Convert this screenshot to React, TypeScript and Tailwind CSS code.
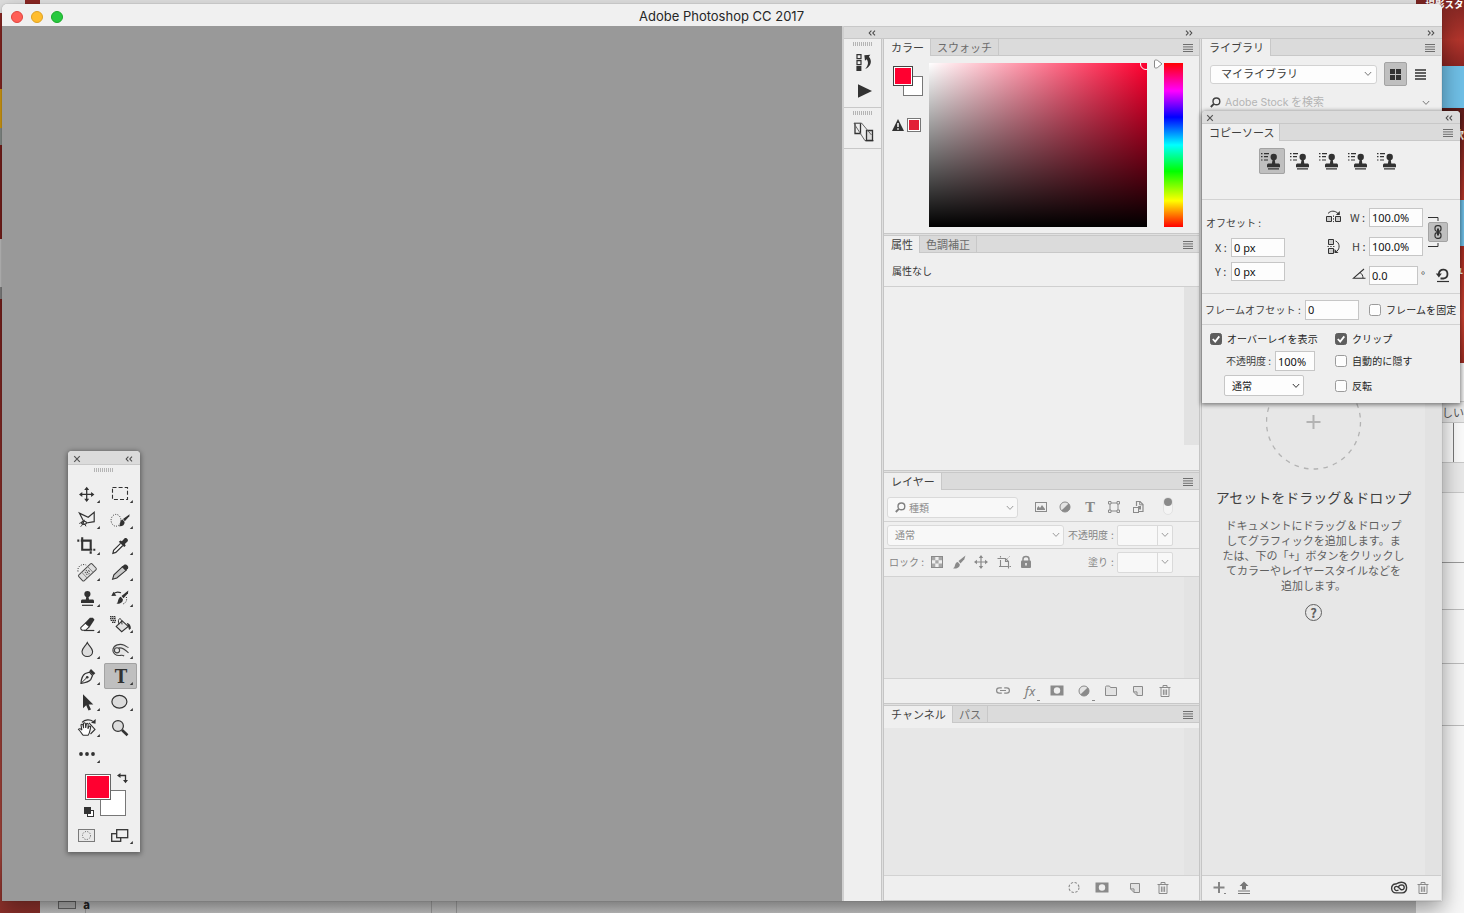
import type { ReactNode } from 'react'
import clsx from 'clsx'

const INK = '#323232'
const DIM = '#8a8a8a'

/* ---------- small shared pieces ---------- */

function Svg({ w, h, className, children }: { w: number; h: number; className?: string; children: ReactNode }) {
  return (
    <svg width={w} height={h} viewBox={`0 0 ${w} ${h}`} className={clsx('shrink-0', className)} fill="none">
      {children}
    </svg>
  )
}

function Chevrons({ dir }: { dir: 'left' | 'right' }) {
  return (
    <Svg w={8} h={6}>
      <path
        d={dir === 'left' ? 'M3.4 .6 1.2 3l2.2 2.4M7 .6 4.8 3 7 5.4' : 'M1 .6 3.2 3 1 5.4M4.6 .6 6.8 3 4.6 5.4'}
        stroke="#4a4a4a"
        strokeWidth="1.1"
      />
    </Svg>
  )
}

function Caret({ color = '#9a9a9a' }: { color?: string }) {
  return (
    <Svg w={8} h={6}>
      <path d="M.8 1 4 4.4 7.2 1" stroke={color} />
    </Svg>
  )
}

function MenuLines() {
  return (
    <Svg w={10} h={8} className="mt-px">
      <path d="M0 .5h10M0 2.9h10M0 5.3h10M0 7.5h10" stroke="#6e6e6e" />
    </Svg>
  )
}

function Grip() {
  return (
    <Svg w={20} h={4}>
      <path d="M.5 0v4M2.5 0v4M4.5 0v4M6.5 0v4M8.5 0v4M10.5 0v4M12.5 0v4M14.5 0v4M16.5 0v4M18.5 0v4" stroke="#b4b4b4" />
    </Svg>
  )
}

function Tabs({ tabs, menuPad = 'pr-1.5' }: { tabs: { label: string; width: string }[]; menuPad?: string }) {
  return (
    <div className="flex h-[17px] shrink-0 bg-[#dbdbdb]">
      {tabs.map((t, i) => (
        <div
          key={t.label}
          className={clsx(
            'flex shrink-0 items-center border-r border-[#c8c8c8] text-[11px] leading-none whitespace-nowrap',
            t.width,
            i === 0 ? 'bg-[#efefef] pl-[7px] text-[#404040]' : 'border-b bg-[#d9d9d9] pl-[6px] text-[#6b6b6b]',
          )}
        >
          {t.label}
        </div>
      ))}
      <div className={clsx('flex flex-1 items-center justify-end border-b border-[#c8c8c8]', menuPad)}>
        <MenuLines />
      </div>
    </div>
  )
}

function Field({ value, className }: { value: string; className?: string }) {
  return (
    <div
      className={clsx(
        "flex shrink-0 items-center border border-[#c6c6c6] bg-[#fdfdfd] pl-[2px] font-['Noto_Sans',sans-serif] text-[11px] leading-none whitespace-pre text-[#111]",
        className,
      )}
    >
      {value}
    </div>
  )
}

function Check({ on, label }: { on?: boolean; label: string }) {
  return (
    <div className="flex items-center text-[10px] leading-none whitespace-nowrap text-[#262626]">
      <Svg w={12} h={12}>
        <rect x=".5" y=".5" width="11" height="11" rx="2" fill={on ? '#5e5e5e' : '#fdfdfd'} stroke={on ? '#5e5e5e' : '#9b9b9b'} />
        {on && <path d="m2.8 6 2.4 2.6L9.3 3.4" stroke="#fff" strokeWidth="1.8" />}
      </Svg>
      <span className="ml-[5px] tracking-[0.1px]">{label}</span>
    </div>
  )
}

function Search({ color }: { color: string }) {
  return (
    <Svg w={11} h={11}>
      <circle cx="6.4" cy="4.4" r="3.4" stroke={color} strokeWidth="1.4" />
      <path d="M3.9 6.8.8 10" stroke={color} strokeWidth="1.9" />
    </Svg>
  )
}

function Trash({ className }: { className?: string }) {
  return (
    <Svg w={16} h={16} className={className}>
      <path d="M2.5 4.5h11M6 4.3V2.5h4v1.8M4 4.5v9h8v-9M6.4 6.5v5.4M8 6.5v5.4M9.6 6.5v5.4" stroke={DIM} />
    </Svg>
  )
}

function NewItem({ className }: { className?: string }) {
  return (
    <Svg w={16} h={16} className={className}>
      <path d="M3.5 3.5h9v9H7l-3.5-3.6zM3.5 8.9H7v3.6" stroke={DIM} fill="#e2e2e2" />
    </Svg>
  )
}

function Mask({ className }: { className?: string }) {
  return (
    <Svg w={16} h={16} className={className}>
      <rect x="1.5" y="2.5" width="13" height="10" fill={DIM} />
      <circle cx="8" cy="7.5" r="3.2" fill="#efefef" />
    </Svg>
  )
}

function Adjust() {
  return (
    <Svg w={16} h={16}>
      <circle cx="8" cy="8" r="5" fill="#e4e4e4" stroke={DIM} />
      <path d="M11.6 4.4A5 5 0 0 1 4.4 11.6z" fill={DIM} />
    </Svg>
  )
}

function MoveGlyph({ color }: { color: string }) {
  return (
    <Svg w={16} h={16}>
      <path d="M8 2.5v11M2.5 8h11" stroke={color} strokeWidth="1.2" />
      <path d="M8 1 5.8 4h4.4zM8 15l-2.2-3h4.4zM1 8l3-2.2v4.4zM15 8l-3-2.2v4.4z" fill={color} />
    </Svg>
  )
}

/* ---------- toolbox ---------- */

const tools: { id: string; active?: boolean; icon: ReactNode }[] = [
  {
    id: 'move',
    icon: (
      <>
        <path d="M15.7 7.5v12M9.7 13.4h12" stroke={INK} strokeWidth="1.3" />
        <path d="m15.7 5.7-2.5 3.3h5zm0 15.4-2.5-3.3h5zM8 13.4l3.3-2.5v5zm15.4 0-3.3-2.5v5z" fill={INK} />
      </>
    ),
  },
  { id: 'marquee', icon: <rect x="8.5" y="6.5" width="15" height="12" stroke={INK} strokeWidth="1.1" strokeDasharray="4 2.1" /> },
  {
    id: 'lasso',
    icon: (
      <>
        <path d="m12.6 14.3-4.2-8.2 8.8 4.1 6-5v9.5l-8 1.3" stroke={INK} strokeWidth="1.2" fill="#efefef" />
        <ellipse cx="13" cy="15.8" rx="2.4" ry="1.6" stroke={INK} strokeWidth="1.1" />
        <path d="M13.5 12.8c-1 3-2 5-3.8 6.9M8.3 16.5c2-1.5 4.7-1.3 6.7 2.8" stroke={INK} />
      </>
    ),
  },
  {
    id: 'quick-select',
    icon: (
      <>
        <ellipse cx="12" cy="13.3" rx="4.9" ry="5.9" stroke={INK} strokeDasharray="1 1.4" />
        <path d="M25.6 7.2 19 12l1.8 2.2 4.5-5z" fill={INK} />
        <path d="m18.6 12.6 2 2.5c.2 3.2-2.6 4.7-6 4.1 1.9-.8 1.1-2.8 1.9-4.7.5-1 1.3-1.7 2.1-1.9z" fill={INK} />
      </>
    ),
  },
  {
    id: 'crop',
    icon: <path d="M6.3 7.6h2M9.8 7.6h9.9v8.6M19.7 18.2v2.6M11.2 4.2v12.5h10M22.3 16.7h2" stroke={INK} strokeWidth="2.1" />,
  },
  {
    id: 'eyedropper',
    icon: (
      <>
        <path d="m16.6 10.3-7 7-.7 3 2.9-.9 7-6.9" stroke={INK} strokeWidth="1.2" fill="#fff" />
        <path d="m14.8 8.8 1.7-1.4 1.4.8 2.5-2.7c1.7-1.4 4.7 1.3 3.1 3.1L20.9 11l.8 1.7-1.5 1.3z" fill={INK} />
      </>
    ),
  },
  {
    id: 'healing',
    icon: (
      <>
        <path d="M7 12.5c-1-6 5-8 8.2-6.4" stroke={INK} strokeDasharray="1 1.4" />
        <g transform="rotate(-43 16.4 13.3)">
          <rect x="7.2" y="9.3" width="18.4" height="8" rx="1.3" fill="#dedede" stroke="#4c4c4c" />
          <path d="M12.3 9.3v8M20.5 9.3v8" stroke="#777" strokeWidth=".8" />
          <circle cx="16.4" cy="13.3" r="2.1" stroke="#555" strokeDasharray="1.1 1.1" />
          <circle cx="16.4" cy="13.3" r=".7" fill="#444" />
        </g>
      </>
    ),
  },
  {
    id: 'pencil',
    icon: (
      <>
        <path d="m18.5 7.7 3.6 3.6-9.3 7.7-4.2 1.2 1.3-4.3z" fill="#c9c9c9" stroke={INK} strokeWidth="1.1" />
        <path d="m17.7 7.7 2.9-2.1c1.7-.6 4.4 1.7 3.5 3.7L22 11.8z" fill={INK} />
      </>
    ),
  },
  {
    id: 'stamp',
    icon: (
      <>
        <circle cx="16.4" cy="9" r="3.1" fill={INK} />
        <path d="M15.4 11h2l.6 3.4h3.4c1 0 1.6.7 1.6 1.7V18H10v-1.9c0-1 .6-1.7 1.6-1.7h3.2z" fill={INK} />
        <path d="M11 20.3h11" stroke={INK} strokeWidth="1.2" />
      </>
    ),
  },
  {
    id: 'history-brush',
    icon: (
      <>
        <path d="M24.3 5.5 17.5 11l2 2.3 4.5-5z" fill={INK} />
        <path d="m16.8 11.7 2.1 2.5c.1 3.4-3 5-6.7 4.4 2-.7 1.4-2.8 2.4-4.7.6-1.2 1.3-1.9 2.2-2.2z" fill={INK} />
        <path d="M9 9.4c1.8-2.3 5-2.8 8-1.6" stroke={INK} strokeWidth="1.2" />
        <path d="m7.3 11 2.2-4.2 2.9 4z" fill={INK} />
        <path d="M22.3 12c1 3-.3 6-3.4 7" stroke={INK} strokeDasharray="1 1.4" />
      </>
    ),
  },
  {
    id: 'eraser',
    icon: (
      <>
        <path d="m10 16.3 4.4-4.1 4 3.5-3.7 3.6h-3.4c-1.3-.6-2-1.8-1.3-3z" fill="#fff" stroke={INK} strokeWidth="1.1" />
        <path d="m13.9 12 5-5.3h3l1.6 2.1-4.6 7z" fill={INK} />
        <path d="M13 19.5h10.3" stroke={INK} strokeWidth="1.2" />
      </>
    ),
  },
  {
    id: 'bucket',
    icon: (
      <>
        <path d="m18.2 9.8 6 5.6-6.5 5.3-5.5-5.3z" fill="#e3e3e3" stroke={INK} strokeWidth="1.1" />
        <path d="M15 13.3c-1.3-3.6-.3-6 1.3-5.5 1.2.4 1.4 2.4 1.7 5.6" stroke={INK} />
        <path d="M22.7 11.8c2.6.5 4.1 2.5 4.2 5.8l-1.8 1.3c-.8-2-.8-4-2.4-7.1z" fill={INK} />
        <path d="M6 5.5h5M6 7.5h6M7 9.5h5M8 11.5h3" stroke={INK} strokeWidth="1.2" strokeDasharray="1.2 .7" />
        <path d="M7 5v5M9 5v7M11 5v7" stroke={INK} strokeWidth=".7" />
      </>
    ),
  },
  {
    id: 'blur',
    icon: <path d="M16.3 5.5c1.6 3.6 5.3 5.8 5.3 9 0 3-2.4 5-5.3 5S11 17.5 11 14.5c0-3.2 3.7-5.4 5.3-9z" fill="#dcdcdc" stroke={INK} strokeWidth="1.1" />,
  },
  {
    id: 'burn',
    icon: (
      <>
        <path
          d="M24.5 10.5c-1.6-.2-2.4-1.5-4.2-2.3-4.8-2-10.3-.2-11.3 4-.7 4.2 3 7 7.5 6.2 1.300-.3 2.500-.2 3.600.6"
          stroke="#444"
          strokeWidth="1.1"
          fill="#e6e6e6"
        />
        <circle cx="13" cy="13.3" r="2.6" stroke="#444" strokeWidth="1.1" />
        <path d="M14.5 11c3-.8 6.500 1.300 10 4.800" stroke="#444" strokeWidth="1.1" />
      </>
    ),
  },
  {
    id: 'pen',
    icon: (
      <>
        <path d="M10 20.3c.2-3.8.8-7.7 4.3-9.8l4.2-1.3 3 3.4-1.6 3.7c-2.3 3-6 3.5-9.9 4z" fill="#efefef" stroke={INK} strokeWidth="1.2" />
        <path d="m18.2 8.300 1.800-2.400 4.300 4.400-2.200 1.900z" fill={INK} />
        <path d="m10.5 19.8 5.3-5.2" stroke={INK} />
        <circle cx="16.2" cy="14.2" r="1.3" fill={INK} />
      </>
    ),
  },
  {
    id: 'type',
    active: true,
    icon: (
      <text x="17" y="19.8" textAnchor="middle" fontFamily="DejaVu Serif, serif" fontWeight="bold" fontSize="18.5" textLength="12.5" lengthAdjust="spacingAndGlyphs" fill={INK}>
        T
      </text>
    ),
  },
  { id: 'path-select', icon: <path d="M12 5.2v14l3.2-2.9 2.3 5.2 2.5-1.1-2.3-5h4.6z" fill={INK} /> },
  { id: 'shape', icon: <ellipse cx="15.4" cy="12.7" rx="7.5" ry="6.4" fill="#dcdcdc" stroke={INK} strokeWidth="1.2" /> },
  {
    id: 'hand',
    icon: (
      <>
        <path d="m18 7.8 6 6.6-4.5 4.6" stroke={INK} strokeWidth="1.1" />
        <path d="M11 7.3c3-3 8-3.3 11-.9" stroke={INK} strokeWidth="1.2" />
        <path d="m24.7 4-.2 4.8-4.5-1z" fill={INK} />
        <path
          d="M12.3 20.3c-1.7-1.5-2.6-4-4.8-5.9.8-1.3 2.4-.6 3.4.8l-.9-5.2c.3-1.2 1.7-1 2 .2l.6 3-.2-4.6c.3-1.2 1.8-1.1 2 .1l.3 4.3.7-4c.5-1 1.9-.7 1.8.5l-.3 4.3 1.1-2.4c.8-.7 1.9-.1 1.6 1-.6 3-.7 5.8-2.600 7.900z"
          fill="#fff"
          stroke={INK}
          strokeWidth="1.1"
        />
      </>
    ),
  },
  {
    id: 'zoom',
    icon: (
      <>
        <circle cx="14" cy="11" r="5.4" fill="#dcdcdc" stroke={INK} strokeWidth="1.2" />
        <path d="m18 15 5.5 5.3" stroke={INK} strokeWidth="2.6" />
      </>
    ),
  },
  {
    id: 'more',
    icon: (
      <>
        <circle cx="10" cy="13" r="1.9" fill={INK} />
        <circle cx="16" cy="13" r="1.9" fill={INK} />
        <circle cx="22" cy="13" r="1.9" fill={INK} />
      </>
    ),
  },
]

function Toolbox() {
  return (
    <div className="absolute top-[451px] left-[68px] flex h-[401px] w-[72px] flex-col overflow-hidden rounded-t-[4px] bg-[#efefef] shadow-[0_1px_5px_1px_rgba(0,0,0,0.4)]">
      <div className="flex h-[14px] shrink-0 items-center justify-between border-b border-[#c8c8c8] bg-[#dbdbdb] pt-[2px] pr-[7px] pl-[5px]">
        <Svg w={8} h={8}>
          <path d="m1.200 1.200 5.600 5.600m0-5.600L1.200 6.800" stroke="#555" strokeWidth="1.2" />
        </Svg>
        <Chevrons dir="left" />
      </div>
      <div className="flex h-4 shrink-0 justify-center pt-[3px]">
        <Grip />
      </div>
      <div className="ml-[3px] grid w-[66px] grid-cols-2">
        {tools.map(t => (
          <div key={t.id} className={clsx('h-[26px] w-[33px]', t.active && 'rounded-[2px] bg-[#bfbfbf] outline outline-offset-[-1px] outline-[#a3a3a3]')}>
            <Svg w={33} h={26}>
              {t.icon}
              {t.id !== 'zoom' && <path d="M28.8 19v3h-3z" fill={INK} />}
            </Svg>
          </div>
        ))}
      </div>

      {/* foreground / background swatches */}
      <div className="relative mt-[5px] ml-4 h-[46px] w-[44px] shrink-0">
        <div className="absolute top-[18px] left-4 h-[26px] w-[26px] border border-[#777] bg-white" />
        <div className="absolute top-[2px] left-[1px] h-[26px] w-[26px] border border-[#666] bg-[#ff0030] shadow-[inset_0_0_0_1px_#fff]" />
        <svg width="12" height="12" className="absolute top-0 left-[33px]" fill="none">
          <path d="M2.5 3.5h6v5" stroke={INK} strokeWidth="1.3" />
          <path d="M0 3.5 3.5 1v5zM8.5 11.3 6 8h5z" fill={INK} />
        </svg>
        <svg width="11" height="11" className="absolute top-[35px] left-0" fill="none">
          <rect x="3.5" y="3.5" width="6" height="6" fill="#fff" stroke={INK} />
          <rect width="7" height="7" fill={INK} />
        </svg>
      </div>
      <div className="mt-[11px] flex shrink-0 pl-[10px]">
        <Svg w={17} h={13}>
          <rect x=".5" y=".5" width="16" height="12" fill="#e8e8e8" stroke="#7a7a7a" />
          <circle cx="8.5" cy="6.5" r="4" stroke="#555" strokeDasharray="1 1.4" />
        </Svg>
        <Svg w={22} h={17} className="ml-4">
          <rect x=".7" y="4.7" width="9" height="7.6" stroke={INK} strokeWidth="1.3" fill="#efefef" />
          <rect x="5.7" y=".7" width="11" height="8" stroke={INK} strokeWidth="1.3" fill="#efefef" />
          <path d="M21.8 12v3h-3z" fill={INK} />
        </Svg>
      </div>
    </div>
  )
}

/* ---------- docked panels ---------- */

function IconStrip() {
  return (
    <div className="flex w-[38px] shrink-0 flex-col border-r border-[#c5c5c5] bg-[#efefef]">
      <div className="flex h-[69px] shrink-0 flex-col items-center border-b border-[#c8c8c8] pt-[3px]">
        <Grip />
        <Svg w={20} h={18} className="mt-[7px] ml-1">
          <path d="M2 1.6h4v4H2zM2 7.6h4v4H2z" stroke={INK} strokeWidth="1.2" />
          <rect x="1.4" y="13" width="5" height="5" fill={INK} />
          <path d="m9.3 2.3 6-.6-1.4 2c3.5 4 2.5 9.5-3.7 12.3 3-3.3 3.7-6.600 1.500-9.800l-1.700 1.600z" fill={INK} />
        </Svg>
        <Svg w={16} h={14} className="mt-[13px] ml-1">
          <path d="M1 .3 15 7 1 13.7z" fill={INK} />
        </Svg>
      </div>
      <div className="flex h-[41px] shrink-0 flex-col items-center border-b border-[#c8c8c8] pt-[3px]">
        <Grip />
        <Svg w={22} h={20} className="mt-[7px] ml-[3px]">
          <path d="M2 1.5v10h5.5v-10" stroke={INK} strokeWidth="1.3" />
          <path d="M13.5 8.5h6v10h-6z" fill="#ddd" stroke={INK} strokeWidth="1.3" />
          <path d="M1 1.5 12 18.7M8.5 1l10 12" stroke="#666" />
          <path d="M1 1.2h7.5M12 18.7h8.5" stroke={INK} />
        </Svg>
      </div>
    </div>
  )
}

function ColorPanel() {
  return (
    <section className="flex h-[195px] shrink-0 flex-col border-b border-[#c8c8c8]">
      <Tabs tabs={[{ label: 'カラー', width: 'w-[47px]' }, { label: 'スウォッチ', width: 'w-[68px]' }]} />
      <div className="flex pt-[7px] pl-[9px]">
        <div className="w-9 shrink-0">
          <div className="relative mt-[3px] h-[30px] w-[30px]">
            <div className="absolute top-[10px] left-[10px] h-5 w-5 border border-[#777] bg-white" />
            <div className="absolute top-0 left-0 h-5 w-5 border border-[#444] bg-[#ff0030] shadow-[inset_0_0_0_1px_#fff]" />
          </div>
          <div className="mt-[22px] flex items-center gap-[3px]">
            <Svg w={12} h={12} className="-ml-px">
              <path d="M6 0 12 12H0z" fill={INK} />
              <path d="M6 4v4M6 9.3v1.4" stroke="#fff" strokeWidth="1.5" />
            </Svg>
            <div className="h-[14px] w-[14px] shrink-0 border border-[#777] bg-[#e21f37] shadow-[inset_0_0_0_1px_#fff]" />
          </div>
        </div>
        <div className="relative h-[164px] w-[218px] shrink-0 overflow-hidden bg-[linear-gradient(to_top,#000,transparent),linear-gradient(to_right,#fff,#ff0030)]">
          <div className="absolute -top-[5px] left-[211px] h-[12px] w-[12px] rounded-full border border-white" />
        </div>
        <Svg w={10} h={10} className="-mt-[4px] ml-[6px]">
          <path d="M1.5 1.8c0-1 2-1 3-.4L9 4.9 4.5 8.6c-1 .6-3 .6-3-.4z" fill="#fff" stroke="#888" />
        </Svg>
        <div className="ml-px h-[164px] w-[19px] bg-[linear-gradient(to_bottom,#f00,#f0f_17%,#00f_33%,#0ff_50%,#0f0_66%,#ff0_84%,#f00)]" />
      </div>
    </section>
  )
}

function PropertiesPanel() {
  return (
    <section className="mt-px flex h-[236px] shrink-0 flex-col border-y border-[#c8c8c8]">
      <Tabs tabs={[{ label: '属性', width: 'w-9' }, { label: '色調補正', width: 'w-[57px]' }]} />
      <div className="flex h-[34px] shrink-0 items-center border-b border-[#cfcfcf] pt-px pl-2 text-[10px] text-[#333]">属性なし</div>
      <div className="flex h-[158px] justify-end">
        <div className="w-[15px] bg-[#e2e2e2]" />
      </div>
    </section>
  )
}

function DimSelect({ className, children }: { className: string; children: ReactNode }) {
  return (
    <div
      className={clsx(
        'flex shrink-0 items-center justify-between rounded-[3px] border border-[#dadada] bg-[#f8f8f8] pr-[3px] pl-[7px] text-[10px] leading-none text-[#8e8e8e]',
        className,
      )}
    >
      {children}
      <Caret />
    </div>
  )
}

function DimAmount({ label }: { label: string }) {
  return (
    <div className="flex shrink-0 items-center text-[10px] leading-none text-[#858585]">
      <span className="whitespace-nowrap">{label}</span>
      <span className="mr-[3px] ml-[3px]">:</span>
      <div className="flex h-[21px] w-[56px] rounded-[2px] border border-[#dadada] bg-[#f8f8f8]">
        <div className="w-[40px] border-r border-[#dadada]" />
        <div className="flex flex-1 items-center justify-center">
          <Caret />
        </div>
      </div>
    </div>
  )
}

function LayersPanel() {
  return (
    <section className="mt-px flex h-[232px] shrink-0 flex-col border-y border-[#c8c8c8]">
      <Tabs tabs={[{ label: 'レイヤー', width: 'w-[58px]' }]} />
      <div className="flex h-8 shrink-0 items-center border-b border-[#d2d2d2] pt-1 pl-[3px]">
        <DimSelect className="h-[21px] w-[131px]">
          <span className="flex items-center gap-[3px]">
            <Search color="#808080" />
            種類
          </span>
        </DimSelect>
        <div className="mb-px ml-[11px] flex">
          <div className="flex w-6 justify-center">
            <Svg w={16} h={16}>
              <rect x="2.5" y="3.5" width="11" height="9" stroke={DIM} />
              <path d="M4 11V9l1.5-2L7 9l2-3 3 4v1z" fill={DIM} />
            </Svg>
          </div>
          <div className="flex w-6 justify-center">
            <Adjust />
          </div>
          <div className="flex w-[25px] justify-center">
            <Svg w={16} h={16}>
              <text x="8" y="12.5" textAnchor="middle" fontFamily="DejaVu Serif, serif" fontWeight="bold" fontSize="13" fill={DIM}>
                T
              </text>
            </Svg>
          </div>
          <div className="flex w-6 justify-center">
            <Svg w={16} h={16}>
              <rect x="4" y="4" width="8" height="8" stroke={DIM} />
              <path d="M2.5 2.5h2.5v2.5H2.5zM11 2.5h2.5v2.5H11zM2.5 11h2.5v2.5H2.5zM11 11h2.5v2.5H11z" fill="#efefef" stroke={DIM} />
            </Svg>
          </div>
          <div className="flex w-6 justify-center">
            <Svg w={16} h={16}>
              <path d="M6.5 7V2.5H10L13 5.5v7H9" stroke={DIM} strokeWidth="1.2" />
              <path d="M9.7 2.5v3.3H13" stroke={DIM} />
              <rect x="3.5" y="8.5" width="5" height="5" stroke={DIM} fill="#efefef" />
              <path d="M8 7h3v3.5H9z" fill={DIM} />
            </Svg>
          </div>
        </div>
        <div className="mb-1 ml-[13px] h-[18px] w-[10px] rounded-full border border-[#e2e2e2] bg-[#f4f4f4]">
          <div className="h-[8px] w-[8px] rounded-full bg-[#8a8a8a]" />
        </div>
      </div>
      <div className="flex h-[27px] shrink-0 items-center border-b border-[#d2d2d2] pl-[3px]">
        <DimSelect className="mr-1 h-[21px] w-[177px]">通常</DimSelect>
        <DimAmount label="不透明度" />
      </div>
      <div className="flex h-[28px] shrink-0 items-center border-b border-[#d2d2d2] pb-px pl-[5px] text-[10px] leading-none text-[#858585]">
        <span className="w-[37px] whitespace-pre">ロック :</span>
        <div className="flex w-[22px] justify-center">
          <Svg w={16} h={16}>
            <rect x="2.5" y="2.5" width="11" height="11" stroke={DIM} />
            <path d="M3 3h3.3v3.3H3zM9.6 3H13v3.3H9.6zM6.3 6.3h3.3v3.3H6.3zM3 9.6h3.3V13H3zM9.6 9.6H13V13H9.6z" fill="#a8a8a8" />
          </Svg>
        </div>
        <div className="flex w-[22px] justify-center">
          <Svg w={16} h={16}>
            <path d="M14.5 1.5 7.5 7l2 2.4 3.8-4.2z" fill={DIM} />
            <path d="m6.8 8 2 2.2c.2 3-3 5-6.8 4 2-.6 1.6-2.4 2.4-4.2.5-1.2 1.4-1.9 2.4-2z" fill={DIM} />
          </Svg>
        </div>
        <div className="flex w-[22px] justify-center">
          <MoveGlyph color={DIM} />
        </div>
        <div className="flex w-[23px] justify-center">
          <Svg w={16} h={16}>
            <path d="M4.5 2v1.5M1.5 4.5H3M3 4.5h6.5l3 3v3.5M4.5 6v7M3 12.5h9M12.5 11v3.5M13.5 12.5H15M9.5 4.5v3h3" stroke={DIM} strokeWidth="1.1" />
            <path d="m11.5 4.5 2-2" stroke={DIM} strokeDasharray="1 1" />
          </Svg>
        </div>
        <div className="flex w-[22px] justify-center">
          <Svg w={16} h={16}>
            <rect x="3" y="6.5" width="10" height="7.5" rx="1" fill={DIM} />
            <path d="M5 7V5c0-3.3 6-3.3 6 0v2" stroke={DIM} strokeWidth="1.5" />
            <path d="M8 9v2.5" stroke="#efefef" strokeWidth="1.6" />
          </Svg>
        </div>
        <div className="ml-[51px]">
          <DimAmount label="塗り" />
        </div>
      </div>
      <div className="flex flex-1 justify-end bg-[#e7e7e7]">
        <div className="w-[15px] bg-[#e3e3e3]" />
      </div>
      <div className="flex h-[25px] shrink-0 items-center border-t border-[#d2d2d2] pl-[105px]">
        <div className="flex w-[27px] justify-center">
          <Svg w={16} h={16}>
            <path d="M6.8 4.8H4.3a2.7 2.7 0 0 0 0 5.4h2.5M9.2 4.8h2.5a2.7 2.7 0 0 1 0 5.4H9.2M5 7.5h6" stroke={DIM} strokeWidth="1.2" />
          </Svg>
        </div>
        <div className="relative flex w-[27px] justify-center pl-px text-[13px] leading-4 text-[#808080] italic">
          <span className="font-['Noto_Sans']">fx</span>
          <span className="absolute -bottom-[2px] left-[21px] h-px w-[3px] bg-[#8a8a8a]" />
        </div>
        <div className="flex w-[27px] justify-center">
          <Mask />
        </div>
        <div className="relative flex w-[28px] justify-center">
          <Adjust />
          <span className="absolute -bottom-[2px] left-[22px] h-px w-[3px] bg-[#8a8a8a]" />
        </div>
        <div className="flex w-[26px] justify-center">
          <Svg w={16} h={16}>
            <path d="M2.5 4.5c0-1 .3-1.5 1-1.5h3l1 1.5h6v8h-11z" fill="#e2e2e2" stroke={DIM} />
          </Svg>
        </div>
        <div className="flex w-[27px] justify-center">
          <NewItem />
        </div>
        <div className="flex w-[27px] justify-center">
          <Trash />
        </div>
      </div>
    </section>
  )
}

function ChannelsPanel() {
  return (
    <section className="mt-px flex flex-1 flex-col border-y border-[#c8c8c8]">
      <Tabs tabs={[{ label: 'チャンネル', width: 'w-[69px]' }, { label: 'パス', width: 'w-[35px]' }]} />
      <div className="mt-[5px] flex flex-1 justify-end bg-[#e7e7e7]">
        <div className="w-[15px] bg-[#e3e3e3]" />
      </div>
      <div className="flex h-[25px] shrink-0 items-center border-t border-[#d2d2d2] pl-[182px]">
        <Svg w={16} h={16}>
          <circle cx="8" cy="7.5" r="5" stroke={DIM} strokeWidth="1.1" strokeDasharray="2.4 1.53" />
        </Svg>
        <Mask className="ml-[12px]" />
        <NewItem className="ml-[17px]" />
        <Trash className="ml-[12px]" />
      </div>
    </section>
  )
}

function LibraryPanel() {
  return (
    <section className="flex w-[240px] shrink-0 flex-col border-l border-[#c5c5c5] bg-[#efefef]">
      <Tabs tabs={[{ label: 'ライブラリ', width: 'w-[69px]' }]} />
      <div className="flex h-9 shrink-0 items-center pl-2">
        <div className="flex h-[19px] w-[167px] items-center justify-between rounded-[3px] border border-[#d2d2d2] bg-[#fdfdfd] pr-1 pb-px pl-[10px] text-[11px] leading-none text-[#3a3a3a]">
          マイライブラリ
          <Caret color="#777" />
        </div>
        <div className="ml-[7px] flex h-6 w-[23px] items-center justify-center rounded-[2px] border border-[#a3a3a3] bg-[#bfbfbf]">
          <Svg w={11} h={11}>
            <path d="M0 0h5v5H0zM6 0h5v5H6zM0 6h5v5H0zM6 6h5v5H6z" fill={INK} />
          </Svg>
        </div>
        <Svg w={11} h={11} className="ml-2">
          <path d="M0 1h11M0 4h11M0 7h11M0 10h11" stroke={INK} strokeWidth="1.7" />
        </Svg>
      </div>
      <div className="flex h-5 shrink-0 items-center pt-px pr-[11px] pl-2 text-[11px] leading-none text-[#b4b4b4]">
        <Search color="#404040" />
        <span className="ml-1 flex-1 whitespace-nowrap">
          <span className="font-['Inter',sans-serif] text-[10.5px]">Adobe Stock</span> を検索
        </span>
        <Caret color="#777" />
      </div>
      <div className="flex flex-1 bg-[#e7e7e7]">
        <div className="flex w-[223px] flex-col items-center pt-[262px]">
          <Svg w={96} h={96}>
            <circle cx="47.5" cy="48" r="47" stroke="#b3b3b3" strokeWidth="1.3" strokeDasharray="4.6 5.25" />
            <path d="M47.5 41v14M40.500 48h14" stroke="#b3b3b3" strokeWidth="2" />
          </Svg>
          <h2 className="mt-[17px] text-[14px] leading-5 whitespace-nowrap text-[#404040]">アセットをドラッグ＆ドロップ</h2>
          <p className="mt-[11px] text-center text-[11px] leading-[15px] whitespace-nowrap text-[#606060]">
            ドキュメントにドラッグ＆ドロップ
            <br />
            してグラフィックを追加します。ま
            <br />
            たは、下の「+」ボタンをクリックし
            <br />
            てカラーやレイヤースタイルなどを
            <br />
            追加します。
          </p>
          <div className="mt-[11px] flex h-[17px] w-[17px] items-center justify-center rounded-full border-[1.5px] border-[#606060] text-[13px] leading-none font-bold text-[#606060]">
            ?
          </div>
        </div>
        <div className="flex-1 bg-[#e2e2e2]" />
      </div>
      <div className="flex h-[26px] shrink-0 items-center border-t border-b border-[#cdcdcd] pr-[10px] pl-[10px]">
        <Svg w={16} h={16}>
          <path d="M7 2v11M1.5 7.5h11" stroke="#858585" strokeWidth="2" />
          <path d="M12 13.5h2" stroke="#858585" />
        </Svg>
        <Svg w={14} h={14} className="ml-[9px]">
          <path d="M7 .5 2.5 5H5v3.5h4V5h2.5z" fill="#777" />
          <path d="M1 10h12M1 12.5h12" stroke="#777" />
        </Svg>
        <Svg w={18} h={14} className="mr-[7px] ml-auto">
          {/* two interlocking rings inside a cloud outline */}
          <path d="M6 3C0 2.500.3 11.900 6 11.900h6.200c6 0 6-10.600-.8-10.700C9 1.200 7.500 2 6 3z" stroke="#3a3a3a" strokeWidth="1.4" />
          <path d="M8.500 9.200c-4 1.600-5.500-3-2.300-3.800 2.500-.2 3.300 2.500 5.300 3.400 3.500.4 3.600-4.700.3-4.900-2.300 0-3.500 1.500-3.300 2.900" stroke="#3a3a3a" strokeWidth="1.4" />
        </Svg>
        <Trash />
      </div>
    </section>
  )
}

/* ---------- floating clone source panel ---------- */

function ClonePanel() {
  return (
    <div className="absolute top-[111px] left-[1202px] flex h-[292px] w-[258px] flex-col overflow-hidden rounded-t-[4px] bg-[#efefef] text-[10px] leading-none text-[#3c3c3c] shadow-[0_1px_4px_1px_rgba(0,0,0,0.45)]">
      <div className="flex h-[13px] shrink-0 items-center justify-between border-b border-[#c8c8c8] bg-[#dbdbdb] pt-px pr-[7px] pl-1">
        <Svg w={8} h={8}>
          <path d="m1.200 1.200 5.600 5.600m0-5.600L1.200 6.800" stroke="#555" strokeWidth="1.2" />
        </Svg>
        <Chevrons dir="left" />
      </div>
      <Tabs tabs={[{ label: 'コピーソース', width: 'w-[78px]' }]} menuPad="pr-[7px]" />

      <div className="flex h-[59px] shrink-0 gap-[3px] border-b border-[#d2d2d2] pt-[7px] pl-[57px]">
        {[0, 1, 2, 3, 4].map(i => (
          <div key={i} className={clsx('h-[26px] w-[26px]', i === 0 && 'rounded-[2px] bg-[#bfbfbf] outline outline-offset-[-1px] outline-[#a3a3a3]')}>
            <Svg w={26} h={26}>
              <path d="M2 5.7h1.5M2 8.7h1.5M2 12h1.5M5 5.7h5M5 8.7h4M5 12h4" stroke={INK} strokeWidth="1.2" />
              <circle cx="14.7" cy="9" r="3.2" fill={INK} />
              <path d="M13.7 11h2l.6 4.4h3c1 0 1.7.7 1.7 1.700v2.200H8v-2.200c0-1 .7-1.700 1.700-1.700h3.200z" fill={INK} />
              <path d="M9 20.9h11" stroke={INK} strokeWidth="1.1" />
            </Svg>
          </div>
        ))}
      </div>

      <div className="flex h-[94px] shrink-0 border-b border-[#d2d2d2]">
        <div className="flex w-[120px] flex-col pt-[18px]">
          <span className="h-[19px] pl-1 whitespace-pre">オフセット :</span>
          <div className="flex h-[20px] items-center pl-[13px] text-[11px]">
            <span className="w-4 whitespace-pre">X :</span>
            <Field value="0 px" className="h-[19px] w-[54px]" />
          </div>
          <div className="mt-1 flex h-[20px] items-center pl-[13px] text-[11px]">
            <span className="w-4 whitespace-pre">Y :</span>
            <Field value="0 px" className="h-[19px] w-[54px]" />
          </div>
        </div>
        <div className="flex w-[103px] flex-col pt-[7px] text-[11px]">
          <div className="flex h-5 items-center">
            <Svg w={20} h={16} className="mr-[7px] ml-px">
              <path d="M3.5 7.5h5v5h-5zM12.5 7.5h5v5h-5z" fill="#ccc" stroke={INK} />
              <path d="M10.5 6.5v1.3m0 1.5v1.3m0 1.5v1" stroke={INK} />
              <path d="M5 4.5c2.5-3 7-3.2 10 0" stroke={INK} />
              <path d="M16.8 2v4h-4z" fill={INK} />
            </Svg>
            <span className="w-[19px] whitespace-pre">W :</span>
            <Field value="100.0%" className="h-[19px] w-[54px]" />
          </div>
          <div className="mt-[9px] flex h-5 items-center">
            <Svg w={20} h={18} className="mr-[9px] ml-px">
              <path d="M5.5 2.5h5v5h-5zM5.5 11.5h5v5h-5z" fill="#ccc" stroke={INK} />
              <path d="M4.5 9.5h1.3m1.5 0h1.3m1.5 0h1.3" stroke={INK} />
              <path d="M12.5 4c4.5 1.5 4.5 8 1.5 10" stroke={INK} />
              <path d="M11.5 12v4h4z" fill={INK} />
            </Svg>
            <span className="w-[17px] whitespace-pre">H :</span>
            <Field value="100.0%" className="h-[19px] w-[54px]" />
          </div>
          <div className="mt-[9px] flex h-5 items-center pl-[30px]">
            <Svg w={15} h={12} className="mr-[2px] mb-[3px]">
              <path d="M12 1 1.5 10.2h12" stroke={INK} strokeWidth="1.1" />
              <path d="M8 4.5c2 1.3 3 3.2 3 5.7" stroke={INK} />
            </Svg>
            <Field value="0.0" className="h-[19px] w-[49px]" />
            <span className="ml-[3px]">°</span>
          </div>
        </div>
        <div className="flex flex-col pt-[16px] pl-[2px]">
          <Svg w={22} h={6}>
            <path d="M1 1.5h10V5" stroke={INK} />
          </Svg>
          <div className="ml-px flex h-5 w-5 items-center justify-center rounded-[2px] border border-[#a3a3a3] bg-[#bfbfbf]">
            <Svg w={10} h={16}>
              <rect x="2" y="1.7" width="6" height="5.6" rx="2.4" stroke={INK} strokeWidth="1.2" />
              <rect x="2" y="8.7" width="6" height="5.6" rx="2.4" stroke={INK} strokeWidth="1.2" />
              <path d="M5 4.5v7" stroke={INK} strokeWidth="2" />
            </Svg>
          </div>
          <Svg w={22} h={6}>
            <path d="M1 4.5h10V1" stroke={INK} />
          </Svg>
          <Svg w={15} h={16} className="mt-[19px] ml-2">
            <path d="M5.5 11.5h3c5.5-.5 5-8.3.3-8.8-2.9-.3-5 1.600-5 4.600" stroke={INK} strokeWidth="1.8" />
            <path d="M.8 6.5h6l-2.900 4z" fill={INK} />
            <path d="M2 14.5h12" stroke={INK} strokeWidth="1.2" />
          </Svg>
        </div>
      </div>

      <div className="flex h-[31px] shrink-0 items-center border-b border-[#d2d2d2] pt-px pl-[3px]">
        <span className="w-[100px] tracking-[0.1px] whitespace-pre">フレームオフセット :</span>
        <Field value="0" className="mr-[10px] h-[20px] w-[54px]" />
        <Check label="フレームを固定" />
      </div>

      <div className="flex pt-2 pl-2">
        <div className="flex w-[125px] flex-col">
          <Check on label="オーバーレイを表示" />
          <div className="mt-[6px] flex items-center pl-4">
            <span className="w-[49px] whitespace-pre">不透明度 :</span>
            <Field value="100%" className="h-[20px] w-[40px]" />
          </div>
          <div className="mt-[4px] ml-[14px] flex h-[21px] w-[80px] items-center justify-between rounded-[2px] border border-[#c6c6c6] bg-[#fdfdfd] pr-[3px] pl-[7px] text-[10px] text-[#1c1c1c]">
            通常
            <Caret color="#333" />
          </div>
        </div>
        <div className="flex flex-col">
          <Check on label="クリップ" />
          <div className="mt-[10px]">
            <Check label="自動的に隠す" />
          </div>
          <div className="mt-[13px]">
            <Check label="反転" />
          </div>
        </div>
      </div>
    </div>
  )
}

/* ---------- desktop behind the window ---------- */

function Desktop() {
  return (
    <div className="flex h-full w-full">
      <div className="flex w-10 shrink-0 flex-col">
        <div className="flex h-[13px] justify-end bg-[#e0e0e0]">
          <div className="w-[15px] bg-[#8e2723]" />
        </div>
        <div className="h-[76px] bg-[#8e2723]" />
        <div className="h-[39px] bg-[#e0a412]" />
        <div className="h-[17px] bg-[#8f9793]" />
        <div className="h-[94px] bg-[#7e201d]" />
        <div className="h-[48px] bg-[#cccccc]" />
        <div className="h-[12px] bg-[#888]" />
        <div className="flex-1 bg-[linear-gradient(#7e201d,#b04a40_90%,#8e302a)]" />
      </div>
      <div className="flex min-w-0 flex-1 flex-col justify-end bg-[#e4e4e4]">
        <div className="flex h-3 bg-[linear-gradient(#bdbdbd,#c8c8c8)]">
          <div className="flex w-[46px] items-start gap-[7px] border-r border-[#a0a0a0] pl-[18px]">
            <div className="h-2 w-[18px] shrink-0 border border-[#666] bg-[#b4b4b4]" />
            <span className="-mt-[3px] text-[12px] leading-[12px] font-bold text-[#222]">a</span>
          </div>
          <div className="w-[346px] border-r border-[#a0a0a0]" />
          <div className="w-[25px] border-r border-[#a0a0a0]" />
        </div>
      </div>
      <div className="flex w-12 shrink-0 flex-col text-[11px] whitespace-nowrap">
        <div className="h-[66px] bg-[linear-gradient(#7c2522,#b3352c_60%,#8a2522)] text-[9.5px] leading-[9px] font-bold text-white">…撮影スタ</div>
        <div className="h-[42px] bg-[#6fbfe6]" />
        <div className="h-[92px] bg-[linear-gradient(#5e1c1a,#b5362b)] pt-[18px] text-right font-bold text-white">飲</div>
        <div className="h-[46px] bg-[#6fbfe6]" />
        <div className="h-[117px] bg-[linear-gradient(#a52c22,#c94232_60%,#9d2c23)] pt-[18px] text-right leading-none font-bold text-white">ュ</div>
        <div className="h-[38px] bg-[#f2f2f2]" />
        <div className="flex h-[22px] items-center border-y border-[#c8c8c8] bg-[#e6e6e6] pl-[26px] text-[11px] text-[#555]">しい</div>
        <div className="flex h-[39px] justify-end bg-[#fafafa] pr-[10px]">
          <div className="w-px bg-[#777]" />
        </div>
        <div className="h-[31px] border-y border-[#c8c8c8] bg-[#e8e8e8]" />
        <div className="h-[70px] border-b border-[#999] bg-[#f4f4f4]" />
        <div className="h-[47px] border-b border-[#bbb] bg-[#f4f4f4]" />
        <div className="h-[54px] border-b border-[#bbb] bg-[#f4f4f4]" />
        <div className="h-[62px] border-b border-[#bbb] bg-[#f4f4f4]" />
        <div className="flex-1 bg-[#f6f6f6]" />
      </div>
    </div>
  )
}

export default function App() {
  return (
    <div className="relative h-[913px] w-[1464px] overflow-hidden font-['Noto_Sans_CJK_JP',sans-serif]">
      <Desktop />

      {/* application window */}
      <div className="absolute top-1 left-[2px] flex h-[897px] w-[1440px] flex-col overflow-hidden rounded-t-[5px] bg-[#efefef] shadow-[0_8px_22px_rgba(0,0,0,0.4),0_0_1px_rgba(0,0,0,0.5)]">
        <header className="flex h-[22px] shrink-0 items-center bg-[#f0f0f0] pt-[2px]">
          <div className="mt-[2px] flex w-[120px] gap-2 pl-[9px]">
            <span className="h-3 w-3 rounded-full border border-[#e0443e] bg-[#ff5f57]" />
            <span className="h-3 w-3 rounded-full border border-[#dea123] bg-[#ffbd2e]" />
            <span className="h-3 w-3 rounded-full border border-[#1aab29] bg-[#28c940]" />
          </div>
          <h1 className="mt-px flex-1 pr-[121px] text-center font-['Inter',sans-serif] text-[13px] leading-none text-[#262626]">Adobe Photoshop CC 2017</h1>
        </header>

        <div className="flex flex-1">
          <div className="w-[840px] shrink-0 bg-[#999]" />
          <div className="flex flex-1 flex-col border-l-2 border-[#cfcfcf]">
            <div className="flex h-[13px] shrink-0 items-center border-y border-[#c8c8c8] bg-[#dbdbdb]">
              <div className="flex w-8 justify-end">
                <Chevrons dir="left" />
              </div>
              <div className="flex w-[317px] justify-end">
                <Chevrons dir="right" />
              </div>
              <div className="flex flex-1 justify-end pr-[7px]">
                <Chevrons dir="right" />
              </div>
            </div>
            <div className="flex flex-1 bg-[#e0e0e0]">
              <IconStrip />
              <div className="ml-px flex w-[317px] shrink-0 flex-col border-x border-[#c5c5c5] bg-[#e0e0e0] [&>section]:bg-[#efefef]">
                <ColorPanel />
                <PropertiesPanel />
                <LayersPanel />
                <ChannelsPanel />
              </div>
              <div className="ml-px flex">
                <LibraryPanel />
              </div>
            </div>
          </div>
        </div>
      </div>

      <ClonePanel />
      <Toolbox />
    </div>
  )
}
